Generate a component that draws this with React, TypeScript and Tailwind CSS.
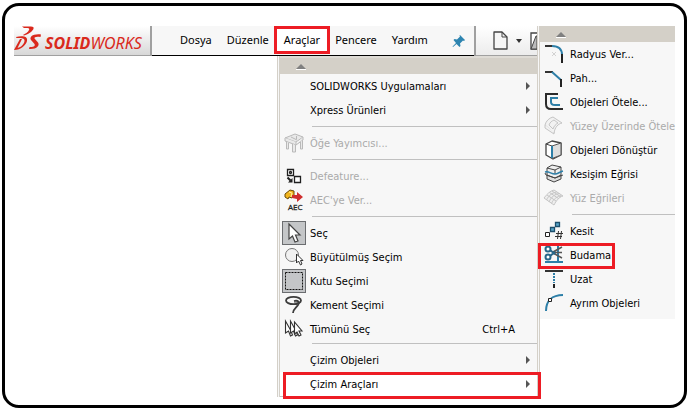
// Araclar menusu ve Cizim Araclari alt menusu
import type { ReactNode } from 'react';
import { clsx } from 'clsx';

type Item = {
  label: string;
  icon?: ReactNode;
  disabled?: boolean;
  pressed?: boolean;
  submenu?: boolean;
  shortcut?: string;
  open?: boolean;
  marked?: boolean;
};

const svg = (children: ReactNode) => (
  <svg viewBox="0 0 24 24" className="h-6 w-6" fill="none" aria-hidden="true">{children}</svg>
);

// Sol menu ikonlari
const PublisherIcon = svg(
  <g stroke="#b9b9b9" fill="#e9e9e9">
    <path d="M3 7l10-4 8 3-7 5z" />
    <path d="M3 7v3l11 4v-3M14 14l7-5V6" />
    <path d="M4.500 11v7h2v-6M10.500 13v8h3v-7M18.500 11v7h2V9.500M14.500 5v3M9 6l6 3" />
  </g>
);
const DefeatureIcon = svg(
  <g stroke="#1f1f1f" strokeWidth="1.300">
    <path d="M5.500 5.500h6v6h-6zM12.500 12.500h6v6h-6z" fill="#fff" />
    <circle cx="8.500" cy="8.500" r="1" />
    <path d="M5.500 13.500l3 3" strokeWidth="2" />
    <path d="M10.500 14v4.500H6z" fill="#1f1f1f" stroke="none" />
  </g>
);
const AecIcon = svg(
  <>
    <path d="M3 6l5-4 4 1v4l-2 3-3-1-1 2-3-2z" fill="#f2b51d" stroke="#6b4a05" />
    <path d="M7 4l3 1-1 4" stroke="#fff0a0" />
    <path d="M10 7h5V4l6 5-6 5v-3l-5-1z" fill="#cf2e2e" />
    <text x="6" y="22" fontSize="8" fontFamily="Open Sans, sans-serif" fill="#222" stroke="#222" strokeWidth=".3">AEC</text>
  </>
);
const CursorIcon = svg(
  <path d="M7 3v15l3.500-3 2.500 6 3-1-2.500-6H18z" fill="#fff" stroke="#444" strokeWidth="1.200" />
);
const MagnifyIcon = svg(
  <>
    <circle cx="10" cy="10" r="6.500" stroke="#777" fill="#f1f1f1" />
    <path d="M14.500 9v9l2-2 2 4 1.500-1-1.500-3.500h2.500z" fill="#fff" stroke="#333" />
  </>
);
const BoxIcon = svg(
  <rect x="3.500" y="3.500" width="17" height="17" stroke="#111" strokeDasharray="2 1" />
);
const LassoIcon = svg(
  <g stroke="#3c3c3c">
    <ellipse cx="11.500" cy="7.500" rx="7.500" ry="3.700" strokeWidth="1.800" />
    <path d="M12 8c4-1 6 1 4 4s-5 4-5 8" strokeWidth="1.800" />
    <path d="M12 9h5" />
  </g>
);
const SelectAllIcon = svg(
  <g fill="#fff" stroke="#333" strokeWidth="1.100">
    <path d="M3.500 4v12l3-2 2 5 2-1-2-5z" />
    <path d="M8.500 4v12l3-2 2 5 2-1-2-5z" />
    <path d="M12.500 5v12l2.500-2 2 4 2-1-2-4h3z" />
  </g>
);

// Sag menu ikonlari
const FilletIcon = svg(
  <>
    <path d="M3 4h7" stroke="#333" strokeWidth="2" />
    <path d="M10 4c7 0 10 3 10 9" stroke="#2d7fa8" strokeWidth="2" />
    <path d="M20 12v9" stroke="#222" strokeWidth="2" />
    <path d="M10 10l4 4m0-4l-4 4" stroke="#d2d2d2" />
  </>
);
const ChamferIcon = svg(
  <>
    <path d="M3 6h8" stroke="#333" strokeWidth="2" />
    <path d="M10 6l9 8" stroke="#2d7fa8" strokeWidth="2" />
    <path d="M19 13v8" stroke="#222" strokeWidth="2" />
  </>
);
const OffsetIcon = svg(
  <>
    <path d="M16 4H4v10q0 5 5 5h12" stroke="#2b2b2b" strokeWidth="2" />
    <path d="M16 8H9v4q0 3 4 3h5" stroke="#2d7fa8" strokeWidth="2" />
  </>
);
const SurfaceIcon = svg(
  <g stroke="#c4c4c4" fill="#f2f2f2">
    <path d="M3 11c1-4 4-7 8-8l9 6c-4 1-7 4-8 10z" />
    <path d="M7 11c1-3 3-4 5-5l4 3c-2 1-4 3-5 6zM3 11v3l9 6v-2" />
  </g>
);
const ConvertIcon = svg(
  <g strokeLinejoin="round">
    <path d="M4 6l6-3 9 2v12l-8 4-7-4z" fill="#fff" stroke="#444" strokeWidth="1.300" />
    <path d="M10 8v12.500l9-3.500V5z" fill="#dedede" stroke="#555" />
    <path d="M4 6l6 2" stroke="#444" />
    <path d="M10 8v12" stroke="#2d7fa8" strokeWidth="2" />
  </g>
);
const IntersectIcon = svg(
  <g strokeLinejoin="round">
    <path d="M5 13v4l7 3 7-3v-4z" fill="#ddd" stroke="#444" />
    <path d="M5 6l5-3 9 2v8l-6 3-8-3z" fill="#eee" stroke="#444" />
    <path d="M5 6l8 2 6-3M13 8v4" stroke="#444" />
    <path d="M3 10c4-1 6 2 10 2 3 0 4-2 8-3" stroke="#2d7fa8" strokeWidth="1.500" />
    <path d="M3 11l1 2 9 3 8-3" stroke="#444" />
  </g>
);
const FaceCurvesIcon = svg(
  <g stroke="#c6c6c6">
    <path d="M2 12C5 8 8 5 12 4l9 6c-4 1-7 5-9 9z" fill="#eee" />
    <path d="M4.500 14C7 9 10 7 14.500 6M7 16c2-5 6-8 10.500-8.500M9.500 17.500c2-5 6-7 10-8M5 9l9 6M7.500 6.500l9 6M10 5l9 6" />
  </g>
);
const SegmentIcon = svg(
  <>
    <path d="M3.500 13.500h4v4h-4z" fill="#fff" stroke="#222" />
    <path d="M8.500 8.500h4v4h-4zM13.500 3.500h4v4h-4z" fill="#58a6c9" stroke="#1d4f6d" strokeWidth="1.300" />
    <path d="M16.500 12l-1 8M19.500 12l-1 8M14 14.500h7M13 17.500h7" stroke="#333" />
  </>
);
const TrimIcon = svg(
  <>
    <path d="M16 3v16M3 19h18" stroke="#2d7fa8" strokeWidth="2" />
    <path d="M11 9l9-5M11 10l9 5M12 9.500h8" stroke="#555" strokeWidth="1.500" />
    <path d="M8 7l5 4M8 13l5-4" stroke="#27678a" strokeWidth="2" />
    <circle cx="6" cy="6" r="2.500" stroke="#27678a" strokeWidth="2" fill="#fff" />
    <circle cx="6" cy="14" r="2.500" stroke="#27678a" strokeWidth="2" fill="#fff" />
  </>
);
const ExtendIcon = svg(
  <>
    <path d="M3 4h18" stroke="#333" strokeWidth="2" />
    <path d="M12 6v10" stroke="#2d7fa8" strokeWidth="2" strokeDasharray="2 1" />
    <path d="M12 17v4" stroke="#222" strokeWidth="2" />
  </>
);
const SplitIcon = svg(
  <>
    <path d="M4 20C4 10 10 4 21 4" stroke="#2d7fa8" strokeWidth="2" />
    <path d="M6.500 7.500h3v3h-3z" fill="#fff" stroke="#222" />
  </>
);

const toolGroups: Item[][] = [
  [
    { label: 'SOLIDWORKS Uygulamaları', submenu: true },
    { label: 'Xpress Ürünleri', submenu: true },
  ],
  [{ label: 'Öğe Yayımcısı...', icon: PublisherIcon, disabled: true }],
  [
    { label: 'Defeature...', icon: DefeatureIcon, disabled: true },
    { label: "AEC'ye Ver...", icon: AecIcon, disabled: true },
  ],
  [
    { label: 'Seç', icon: CursorIcon, pressed: true },
    { label: 'Büyütülmüş Seçim', icon: MagnifyIcon },
    { label: 'Kutu Seçimi', icon: BoxIcon, pressed: true },
    { label: 'Kement Seçimi', icon: LassoIcon },
    { label: 'Tümünü Seç', icon: SelectAllIcon, shortcut: 'Ctrl+A' },
  ],
  [
    { label: 'Çizim Objeleri', submenu: true },
    { label: 'Çizim Araçları', submenu: true, open: true },
  ],
];

const sketchGroups: Item[][] = [
  [
    { label: 'Radyus Ver...', icon: FilletIcon },
    { label: 'Pah...', icon: ChamferIcon },
    { label: 'Objeleri Ötele...', icon: OffsetIcon },
    { label: 'Yüzey Üzerinde Ötele', icon: SurfaceIcon, disabled: true },
    { label: 'Objeleri Dönüştür', icon: ConvertIcon },
    { label: 'Kesişim Eğrisi', icon: IntersectIcon },
    { label: 'Yüz Eğrileri', icon: FaceCurvesIcon, disabled: true },
  ],
  [
    { label: 'Kesit', icon: SegmentIcon },
    { label: 'Budama', icon: TrimIcon, marked: true },
    { label: 'Uzat', icon: ExtendIcon },
    { label: 'Ayrım Objeleri', icon: SplitIcon },
  ],
];

function ScrollUp() {
  return (
    <button type="button" aria-label="Yukarı kaydır" className="flex h-4 w-full items-center bg-[#d4d0c8] pt-[2px] pl-4">
      <svg viewBox="0 0 10 6" className="h-[6px] w-[10px]" aria-hidden="true">
        <path d="M0 5l5-5 5 5z" fill="#808080" />
        <path d="M0 5.500h10" stroke="#fff" />
      </svg>
    </button>
  );
}

function MenuRow({ item }: { item: Item }) {
  return (
    <li className={clsx('relative', item.open && 'bg-white')}>
      <button
        type="button"
        disabled={item.disabled}
        className={clsx(
          'flex h-6 w-full items-center gap-1 whitespace-nowrap pl-[2px] text-left',
          item.disabled ? 'text-[#aaaaaa]' : 'text-black'
        )}
      >
        <span className={clsx('h-6 w-6 flex-shrink-0', item.pressed && 'bg-[#c4c6c8] outline outline-1 -outline-offset-1 outline-[#6b6d70]')}>
          {item.icon}
        </span>
        <span className="flex-1 pt-[2px]">{item.label}</span>
        {item.shortcut && <span className="pt-[2px] pr-[22px]">{item.shortcut}</span>}
        {item.submenu && (
          <svg viewBox="0 0 4 8" className="mr-[7px] h-2 w-1" aria-hidden="true">
            <path d="M0 0l4 4-4 4z" fill="#555" />
          </svg>
        )}
      </button>
      {item.open && <span className="pointer-events-none absolute -right-1 -bottom-[3px] left-[3px] top-0 z-10 border-3 border-[#ed1c24]" />}
      {item.marked && <span className="pointer-events-none absolute -left-[2px] top-0 z-10 h-[26px] w-[77px] border-3 border-[#ed1c24]" />}
    </li>
  );
}

function MenuPanel({ groups, label }: { groups: Item[][]; label: string }) {
  return (
    <nav aria-label={label} className="text-[11px] leading-4">
      <ScrollUp />
      {groups.map((group, i) => (
        <div key={group[0].label}>
          {i > 0 && <hr className={clsx('ml-8 border-t border-[#c0c0c0]', i === 4 ? 'mt-[2px] mb-1' : 'my-1')} />}
          <ul>
            {group.map((item) => <MenuRow key={item.label} item={item} />)}
          </ul>
        </div>
      ))}
    </nav>
  );
}

function Logo() {
  return (
    <div className="flex h-[30px] w-[138px] flex-shrink-0 items-center border-r-2 border-b border-[#a0a0a0] bg-linear-to-b from-white to-[#d8d8d8]">
      <svg viewBox="0 0 136 29" className="h-[29px] w-full" role="img" aria-label="SOLIDWORKS">
        <g fill="#da291c">
          <path d="M8 .5h9c4 0 3 3 0 5.500-2 1.500-4 2.500-7 3.500l-1-.5c3-1.500 5-3 6-5 .7-1.300 0-2-1.500-2H10z" />
          <path d="M2 11c7-1.500 12-.5 11 4-.8 4-6 9-13 9l6-11h2l-4.500 9c4-.8 6.500-4 7-7 .4-2.500-2-3.500-8-3z" />
          <path d="M27 8.500l-.5 2.500c-4-.8-6.500 0-6 1.500l3.500 4c2 3-1 7-9 6.500l.5-2c4 .5 6-1 5-3l-3.500-4c-2-3 2-6.500 10-5.500z" />
        </g>
        <text x="31" y="23" fontSize="16" fontStyle="italic" fontFamily="Noto Sans, sans-serif" fill="#da291c">
          <tspan fontWeight="bold">SOLID</tspan>WORKS
        </text>
      </svg>
    </div>
  );
}

function Toolbar() {
  return (
    <div className="flex h-[30px] w-[63px] flex-shrink-0 items-center justify-end overflow-hidden border-b border-l-2 border-[#a0a0a0] bg-linear-to-b from-white to-[#ececec]">
      <button type="button" aria-label="Yeni">
        <svg viewBox="0 0 15 19" className="h-[19px] w-[15px]" fill="none" aria-hidden="true">
          <path d="M1 1h8l5 5v12H1z" fill="#f6f6f6" stroke="#444" strokeWidth="1.300" strokeLinejoin="round" />
          <path d="M9 1v5h5" stroke="#444" />
        </svg>
      </button>
      <button type="button" aria-label="Yeni seçenekleri" className="px-[8px]">
        <svg viewBox="0 0 6 4" className="h-1 w-[6px]" aria-hidden="true">
          <path d="M0 0h6L3 4z" fill="#333" />
        </svg>
      </button>
      <button type="button" aria-label="Aç">
        <svg viewBox="0 0 7 19" className="h-[19px] w-[7px]" fill="none" aria-hidden="true">
          <path d="M7 2H1v16h6" fill="#fff" stroke="#444" strokeWidth="1.300" />
          <path d="M1 18L6 5h1v13z" fill="#bbb" stroke="#444" />
        </svg>
      </button>
    </div>
  );
}

export default function App() {
  return (
    <div className="min-h-screen bg-white pt-[3px] pr-[2px] pl-[2px] font-['DejaVu_Sans_Condensed','DejaVu_Sans',sans-serif] text-black">
      <div className="flex min-h-[405px] items-start rounded-[17px] border-3 border-black pt-5 pr-[9px] pl-[9px]">
        <div className="min-w-0 flex-1">
          {/* Ust cubuk */}
          <header className="flex border-r-3 border-double border-[#d4d0c8] bg-[#f7f7f7]">
            <Logo />
            <nav aria-label="Menü" className="flex h-[30px] flex-1 items-center gap-[15px] border-b border-black pl-7 font-['Noto_Sans',sans-serif] text-[11px]">
              <a href="#dosya">Dosya</a>
              <a href="#duzenle">Düzenle</a>
              <a href="#araclar" className="-mx-[10px] flex h-7 items-center self-start border-3 border-[#ed1c24] bg-white px-[7px]">Araçlar</a>
              <a href="#pencere">Pencere</a>
              <a href="#yardim">Yardım</a>
              <button type="button" aria-label="Sabitle" className="mr-2 ml-auto">
                <svg viewBox="0 0 14 14" className="h-[14px] w-[14px]" aria-hidden="true">
                  <path d="M8 1l5 5-1 1-1-.5-3 3 .5 2.500-1 1-3-3L1 13l-.5-.5L4 9 1.500 6l1-1L5 5.500l3-3L7.500 1.500z" fill="#2d84b0" />
                </svg>
              </button>
            </nav>
            <Toolbar />
          </header>

          {/* Araclar menusu */}
          <div className="ml-auto w-[263px] border-x-3 border-double border-[#d4d0c8] bg-[#f7f7f7]">
            <div className="border-t-2 border-b border-t-[#dedbd5] border-b-[#c0c0c0]">
              <MenuPanel groups={toolGroups} label="Araçlar" />
            </div>
          </div>
        </div>

        {/* Cizim Araclari alt menusu */}
        <aside className="w-[135px] flex-shrink-0 bg-[#f7f7f7] pb-1">
          <MenuPanel groups={sketchGroups} label="Çizim Araçları" />
        </aside>
      </div>
    </div>
  );
}
